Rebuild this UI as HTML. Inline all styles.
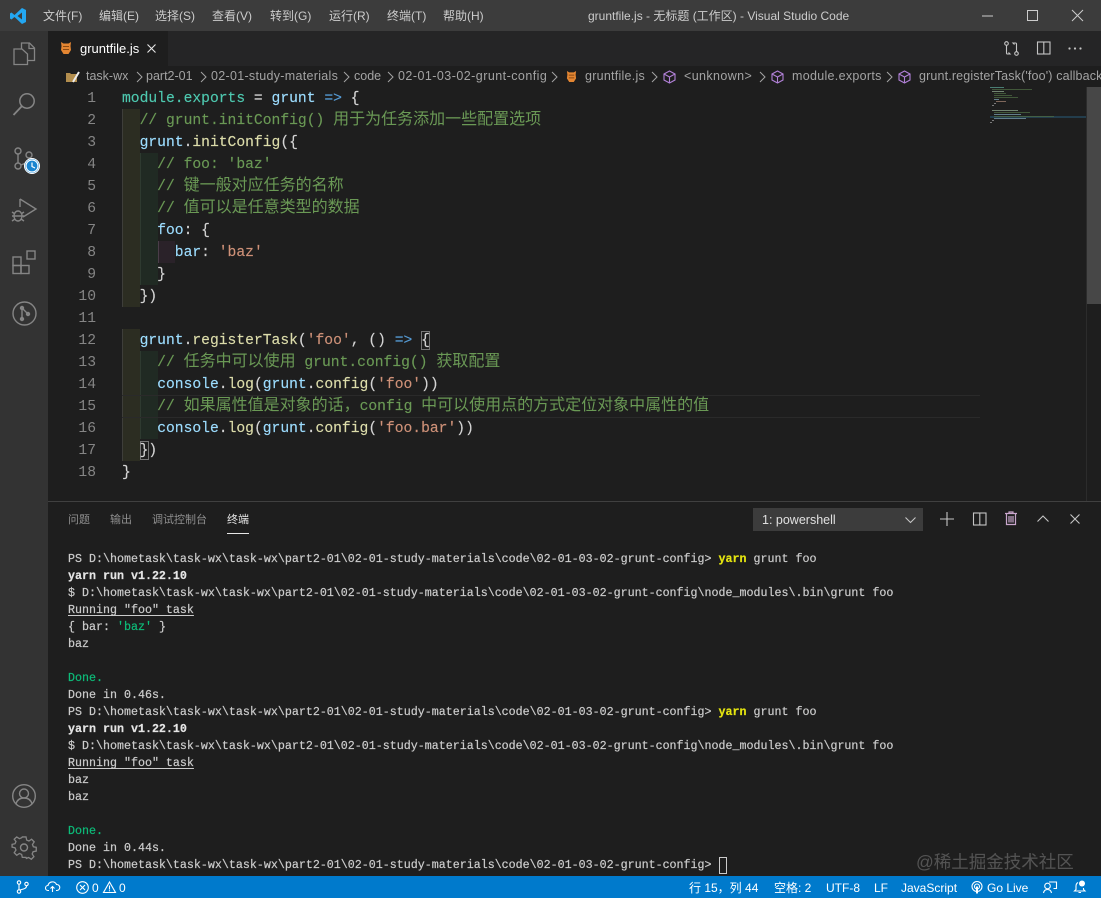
<!DOCTYPE html>
<html lang="zh"><head><meta charset="utf-8"><title>gruntfile.js - Visual Studio Code</title>
<style>
*{box-sizing:border-box}
html,body{margin:0;padding:0;background:#1e1e1e}
#app{position:relative;width:1101px;height:898px;overflow:hidden;background:#1e1e1e;font-family:"Liberation Sans","Noto Sans CJK SC",sans-serif;color:#ccc}
.a{position:absolute}
.t{position:absolute;white-space:pre;line-height:1}
svg{position:absolute;display:block;overflow:visible}
.m{font-size:12px;color:#ccc;top:9px;line-height:14px}
.bc{position:absolute;top:69px;font-size:12.5px;line-height:15px;color:#a3a3a3;white-space:pre}
.chev{position:absolute;top:70px;width:14px;height:14px}
.ln{position:absolute;left:48px;width:48px;text-align:right;height:22px;margin-top:1px;font:14.67px/22px "Liberation Mono",monospace;color:#858585}
.cl{position:absolute;left:122px;height:22px;margin-top:1px;white-space:pre;font:14.67px/22px "Liberation Mono","Noto Sans CJK SC",monospace;color:#d4d4d4;-webkit-text-stroke:.15px}
.cl i{font-style:normal;font-family:"Noto Sans CJK SC",sans-serif;font-size:16px;line-height:0;-webkit-text-stroke:0}
.w{color:#4ec9b0}.v{color:#9cdcfe}.k{color:#569cd6}.f{color:#dcdcaa}.s{color:#ce9178}.c{color:#6a9955}
.tm{position:absolute;left:68px;height:17px;margin-top:1px;white-space:pre;font:11.67px/17px "Liberation Mono",monospace;color:#ccc;-webkit-text-stroke:.2px}
.b{font-weight:bold;color:#e5e5e5}.y{color:#e5e510;font-weight:bold}.g{color:#23d18b}.gg{color:#0dbc79}
.u{text-decoration:underline;text-underline-offset:2px}
.pt{position:absolute;top:514px;font-size:11px;line-height:13px;color:#8f8f8f;white-space:pre}
.st{position:absolute;top:881px;font-size:12px;line-height:14px;color:#fff;white-space:pre}
.ind{position:absolute}
</style></head><body><div id="app">

<!-- title bar -->
<div class="a" style="left:0;top:0;width:1101px;height:31px;background:#3c3c3c"></div>
<svg style="left:9px;top:7px" width="18" height="18" viewBox="0 0 18 18"><path d="M13 1 L17 3 V15 L13 17 L5.500 10 L2.500 12.500 L1 11.500 V6.500 L2.500 5.500 L5.500 8 Z M13 5.500 L8.500 9 L13 12.500 Z" fill="#23a7f2" fill-rule="evenodd"/></svg>
<span class="t m" style="left:43px">文件(F)</span>
<span class="t m" style="left:99px">编辑(E)</span>
<span class="t m" style="left:155px">选择(S)</span>
<span class="t m" style="left:212px">查看(V)</span>
<span class="t m" style="left:270px">转到(G)</span>
<span class="t m" style="left:329px">运行(R)</span>
<span class="t m" style="left:387px">终端(T)</span>
<span class="t m" style="left:443px">帮助(H)</span>
<span class="t m" style="left:588px">gruntfile.js - 无标题 (工作区) - Visual Studio Code</span>
<svg style="left:982px;top:10px" width="11" height="11"><path d="M0 6h11" stroke="#ccc" fill="none"/></svg>
<svg style="left:1027px;top:10px" width="11" height="11"><rect x=".5" y=".5" width="10" height="10" stroke="#ccc" fill="none"/></svg>
<svg style="left:1072px;top:10px" width="11" height="11"><path d="M0 0L11 11M11 0L0 11" stroke="#ccc" fill="none"/></svg>

<!-- activity bar -->
<div class="a" style="left:0;top:31px;width:48px;height:845px;background:#333"></div>
<svg style="left:12px;top:42px" width="24" height="24" viewBox="0 0 24 24" fill="none" stroke="#858585" stroke-width="1.300"><path d="M9.500 7V1h8l5 5v12.500h-7"/><path d="M17 1v5.500h5.500"/><path d="M2 7h8l5.500 5v10.500H2z"/></svg>
<svg style="left:12px;top:92px" width="24" height="24" viewBox="0 0 24 24" fill="none" stroke="#858585" stroke-width="1.500"><circle cx="15" cy="9" r="7.200"/><path d="M9.800 14.200L1.500 23" stroke-width="1.800"/></svg>
<svg style="left:12px;top:146px" width="30" height="30" viewBox="0 0 30 30" fill="none" stroke="#858585" stroke-width="1.400"><circle cx="6" cy="5" r="3"/><circle cx="6" cy="20" r="3"/><circle cx="17" cy="9" r="3"/><path d="M6 8v9M17 12c0 4-5 6-8.300 7"/><circle cx="20" cy="20" r="7.500" fill="#1a85d0" stroke="#fff" stroke-width="1"/><circle cx="20" cy="20" r="6" fill="#1a85d0" stroke="#fff" stroke-width="1.200"/><path d="M20 16.500V20.500L23 22" stroke="#fff" stroke-width="1.200"/></svg>
<svg style="left:11px;top:197px" width="26" height="26" viewBox="0 0 26 26" fill="none" stroke="#858585" stroke-width="1.400"><path d="M9 2L25 12L12 20"/><path d="M9 2v8"/><ellipse cx="7" cy="19" rx="4" ry="5"/><path d="M1 15l3 2M13 15l-3 2M1 19h2M11 19h2M1 24l3-2M13 24l-3-2M3 19h8"/></svg>
<svg style="left:12px;top:250px" width="25" height="25" viewBox="0 0 25 25" fill="none" stroke="#858585" stroke-width="1.400"><rect x="1" y="7" width="8" height="8.500"/><rect x="1" y="15.500" width="8" height="8"/><rect x="9" y="15.500" width="8" height="8"/><rect x="15" y="1" width="8" height="8"/></svg>
<svg style="left:12px;top:301px" width="25" height="25" viewBox="0 0 25 25" fill="none" stroke="#858585" stroke-width="1.400"><circle cx="12.500" cy="12.500" r="11.500"/><circle cx="10" cy="7" r="1.500" fill="#858585"/><circle cx="10" cy="18" r="1.500" fill="#858585"/><circle cx="16" cy="13" r="1.500" fill="#858585"/><path d="M10 7v11M10 7l6 6"/></svg>
<svg style="left:12px;top:784px" width="24" height="24" viewBox="0 0 24 24" fill="none" stroke="#858585" stroke-width="1.400"><circle cx="12" cy="12" r="11.300"/><circle cx="12" cy="9.500" r="4.500"/><path d="M4 20c1-4 4-6 8-6s7 2 8 6"/></svg>
<svg style="left:12px;top:836px" width="24" height="24" viewBox="0 0 24 24" fill="none" stroke="#858585" stroke-width="1.400"><path d="M10 1h4l.7 3.400 2.400 1 2.900-1.900 2.800 2.800-1.900 2.900 1 2.400 3.100.6v4l-3.400.7-1 2.400 1.900 2.900-2.800 2.800-2.900-1.900-2.400 1L14 23h-4l-.7-3.200-2.400-1L4 20.700 1.300 18l1.900-2.900-1-2.400L-1 12V9l3.200-.7 1-2.400L1.300 3.500 4 1 6.900 2.900l2.400-1z" transform="translate(1 0) scale(.93)"/><circle cx="12" cy="11.500" r="3.500"/></svg>

<!-- tabs -->
<div class="a" style="left:48px;top:31px;width:1053px;height:35px;background:#252526"></div>
<div class="a" style="left:48px;top:31px;width:120px;height:35px;background:#1e1e1e"></div>
<svg style="left:60px;top:41px" width="12" height="14" viewBox="0 0 12 14"><path d="M1 1L3.500 2.500H8.500L11 1L10.500 5L11 9L8.500 13H3.500L1 9L1.500 5Z" fill="#e48632"/><path d="M3 5.500h6M3 8.500h6" stroke="#8a4a12" stroke-width="1"/></svg>
<span class="t" style="left:80px;top:41px;font-size:13px;line-height:16px;color:#fff">gruntfile.js</span>
<svg style="left:147px;top:44px" width="9" height="9"><path d="M.5.5L8.500 8.500M8.500.5L.5 8.500" stroke="#e8e8e8" stroke-width="1.100" fill="none"/></svg>
<svg style="left:1004px;top:41px" width="15" height="15" viewBox="0 0 15 15" fill="none" stroke="#c5c5c5" stroke-width="1.100"><circle cx="2.500" cy="2.500" r="1.800"/><circle cx="12.500" cy="12.500" r="1.800"/><path d="M2.500 4.500V12c0 .8.500 1 1 1H6L4.500 11.500M12.500 10.500V3c0-.8-.500-1-1-1H9l1.500 1.500"/></svg>
<svg style="left:1037px;top:41px" width="14" height="14" fill="none" stroke="#c5c5c5" stroke-width="1.100"><rect x=".5" y="1" width="12.500" height="12"/><path d="M6.800 1v12"/></svg>
<svg style="left:1068px;top:47px" width="14" height="3" fill="#c5c5c5"><circle cx="1.500" cy="1.500" r="1.100"/><circle cx="7" cy="1.500" r="1.100"/><circle cx="12.500" cy="1.500" r="1.100"/></svg>

<!-- breadcrumbs -->
<svg style="left:66px;top:71px" width="14" height="12" viewBox="0 0 14 12"><path d="M0 2h4l1 1h6v8H0z" fill="#b38e4e"/><path d="M7 11L13 1" stroke="#eee" stroke-width="2"/></svg>
<span class="bc" style="left:86px">task-wx</span>
<span class="bc" style="left:146px">part2-01</span>
<span class="bc" style="left:211px;letter-spacing:.3px">02-01-study-materials</span>
<span class="bc" style="left:354px">code</span>
<span class="bc" style="left:398px;letter-spacing:.46px">02-01-03-02-grunt-config</span>
<svg style="left:566px;top:70px" width="11" height="13" viewBox="0 0 12 14"><path d="M1 1L3.500 2.500H8.500L11 1L10.500 5L11 9L8.500 13H3.500L1 9L1.500 5Z" fill="#e48632"/><path d="M3 5.500h6M3 8.500h6" stroke="#8a4a12"/></svg>
<span class="bc" style="left:585px;letter-spacing:.25px">gruntfile.js</span>
<span class="bc" style="left:684px;letter-spacing:.4px">&lt;unknown&gt;</span>
<span class="bc" style="left:792px;letter-spacing:.3px">module.exports</span>
<span class="bc" style="width:182px;overflow:hidden;left:919px;letter-spacing:.15px">grunt.registerTask('foo') callback</span>
<svg class="chev" style="left:132px" viewBox="0 0 14 14"><path d="M5 2l5 5-5 5" fill="none" stroke="#a3a3a3"/></svg>
<svg class="chev" style="left:196px" viewBox="0 0 14 14"><path d="M5 2l5 5-5 5" fill="none" stroke="#a3a3a3"/></svg>
<svg class="chev" style="left:339px" viewBox="0 0 14 14"><path d="M5 2l5 5-5 5" fill="none" stroke="#a3a3a3"/></svg>
<svg class="chev" style="left:383px" viewBox="0 0 14 14"><path d="M5 2l5 5-5 5" fill="none" stroke="#a3a3a3"/></svg>
<svg class="chev" style="left:547px" viewBox="0 0 14 14"><path d="M5 2l5 5-5 5" fill="none" stroke="#a3a3a3"/></svg>
<svg class="chev" style="left:647px" viewBox="0 0 14 14"><path d="M5 2l5 5-5 5" fill="none" stroke="#a3a3a3"/></svg>
<svg class="chev" style="left:755px" viewBox="0 0 14 14"><path d="M5 2l5 5-5 5" fill="none" stroke="#a3a3a3"/></svg>
<svg class="chev" style="left:882px" viewBox="0 0 14 14"><path d="M5 2l5 5-5 5" fill="none" stroke="#a3a3a3"/></svg>
<svg style="left:663px;top:70px" width="13" height="14" viewBox="0 0 13 14" fill="none" stroke="#b180d7" stroke-width="1.100"><path d="M6.500 1L12 4v6l-5.500 3L1 10V4zM1 4l5.500 3L12 4M6.500 7v6"/></svg>
<svg style="left:771px;top:70px" width="13" height="14" viewBox="0 0 13 14" fill="none" stroke="#b180d7" stroke-width="1.100"><path d="M6.500 1L12 4v6l-5.500 3L1 10V4zM1 4l5.500 3L12 4M6.500 7v6"/></svg>
<svg style="left:898px;top:70px" width="13" height="14" viewBox="0 0 13 14" fill="none" stroke="#b180d7" stroke-width="1.100"><path d="M6.500 1L12 4v6l-5.500 3L1 10V4zM1 4l5.500 3L12 4M6.500 7v6"/></svg>

<!-- indent rainbow -->
<div class="ind" style="left:122px;top:109px;width:18px;height:198px;background:#2c2d22"></div>
<div class="ind" style="left:122px;top:329px;width:18px;height:132px;background:#2c2d22"></div>
<div class="ind" style="left:140px;top:153px;width:18px;height:132px;background:#202a23"></div>
<div class="ind" style="left:140px;top:351px;width:18px;height:88px;background:#202a23"></div>
<div class="ind" style="left:158px;top:241px;width:17px;height:22px;background:#2a2229"></div>
<div class="ind" style="left:122px;top:109px;width:1px;height:198px;background:#3e3e3a"></div>
<div class="ind" style="left:122px;top:329px;width:1px;height:132px;background:#3e3e3a"></div>
<div class="ind" style="left:140px;top:153px;width:1px;height:132px;background:#2e3a30"></div>
<div class="ind" style="left:140px;top:351px;width:1px;height:88px;background:#2e3a30"></div>
<div class="ind" style="left:158px;top:241px;width:1px;height:22px;background:#4a3d49"></div>
<!-- active line -->
<div class="ind" style="left:122px;top:395px;width:858px;height:23px;border-top:1px solid #2a2a2a;border-bottom:1px solid #2a2a2a"></div>
<!-- bracket match -->
<div class="ind" style="left:421px;top:331px;width:9px;height:19px;border:1px solid #777"></div>
<div class="ind" style="left:140px;top:441px;width:9px;height:19px;border:1px solid #777"></div>

<!-- line numbers -->
<div class="ln" style="top:87px">1</div><div class="ln" style="top:109px">2</div><div class="ln" style="top:131px">3</div><div class="ln" style="top:153px">4</div><div class="ln" style="top:175px">5</div><div class="ln" style="top:197px">6</div><div class="ln" style="top:219px">7</div><div class="ln" style="top:241px">8</div><div class="ln" style="top:263px">9</div><div class="ln" style="top:285px">10</div><div class="ln" style="top:307px">11</div><div class="ln" style="top:329px">12</div><div class="ln" style="top:351px">13</div><div class="ln" style="top:373px">14</div><div class="ln" style="top:395px">15</div><div class="ln" style="top:417px">16</div><div class="ln" style="top:439px">17</div><div class="ln" style="top:461px">18</div>

<!-- code -->
<div class="cl" style="top:87px"><span class="w">module.exports</span> = <span class="v">grunt</span> <span class="k">=&gt;</span> {</div>
<div class="cl c" style="top:109px;color:#6a9955">  // grunt.initConfig() <i>用于为任务添加一些配置选项</i></div>
<div class="cl" style="top:131px">  <span class="v">grunt</span>.<span class="f">initConfig</span>({</div>
<div class="cl" style="top:153px;color:#6a9955">    // foo: 'baz'</div>
<div class="cl" style="top:175px;color:#6a9955">    // <i>键一般对应任务的名称</i></div>
<div class="cl" style="top:197px;color:#6a9955">    // <i>值可以是任意类型的数据</i></div>
<div class="cl" style="top:219px">    <span class="v">foo</span>: {</div>
<div class="cl" style="top:241px">      <span class="v">bar</span>: <span class="s">'baz'</span></div>
<div class="cl" style="top:263px">    }</div>
<div class="cl" style="top:285px">  })</div>
<div class="cl" style="top:329px">  <span class="v">grunt</span>.<span class="f">registerTask</span>(<span class="s">'foo'</span>, () <span class="k">=&gt;</span> {</div>
<div class="cl" style="top:351px;color:#6a9955">    // <i>任务中可以使用</i> grunt.config() <i>获取配置</i></div>
<div class="cl" style="top:373px">    <span class="v">console</span>.<span class="f">log</span>(<span class="v">grunt</span>.<span class="f">config</span>(<span class="s">'foo'</span>))</div>
<div class="cl" style="top:395px;color:#6a9955">    // <i>如果属性值是对象的话，</i>config <i>中可以使用点的方式定位对象中属性的值</i></div>
<div class="cl" style="top:417px">    <span class="v">console</span>.<span class="f">log</span>(<span class="v">grunt</span>.<span class="f">config</span>(<span class="s">'foo.bar'</span>))</div>
<div class="cl" style="top:439px">  })</div>
<div class="cl" style="top:461px">}</div>

<!-- minimap -->
<svg style="left:990px;top:87px" width="97" height="40" shape-rendering="crispEdges">
<g fill-opacity=".75">
<rect x="0" y="0" width="14" height="1" fill="#5a9e90"/><rect x="2" y="2" width="40" height="1" fill="#4d6b43"/><rect x="2" y="4" width="12" height="1" fill="#8fa88f"/><rect x="4" y="6" width="12" height="1" fill="#4d6b43"/><rect x="4" y="8" width="18" height="1" fill="#4d6b43"/><rect x="4" y="10" width="24" height="1" fill="#4d6b43"/><rect x="4" y="12" width="5" height="1" fill="#7a9fb0"/><rect x="6" y="14" width="10" height="1" fill="#a08070"/><rect x="4" y="16" width="2" height="1" fill="#999"/><rect x="2" y="18" width="2" height="1" fill="#999"/>
<rect x="2" y="23" width="26" height="1" fill="#8fa88f"/><rect x="4" y="25" width="36" height="1" fill="#4d6b43"/><rect x="4" y="27" width="27" height="1" fill="#7a9fb0"/><rect x="0" y="29" width="97" height="2" fill="#25485c"/><rect x="4" y="29" width="60" height="1" fill="#4d6b43"/><rect x="4" y="31" width="32" height="1" fill="#7a9fb0"/><rect x="2" y="33" width="2" height="1" fill="#999"/><rect x="0" y="35" width="2" height="1" fill="#999"/>
</g></svg>
<!-- scrollbar -->
<div class="a" style="left:1087px;top:87px;width:14px;height:217px;background:#474747"></div>
<div class="a" style="left:1086px;top:87px;width:1px;height:414px;background:#2c2c2c"></div>

<!-- panel -->
<div class="a" style="left:48px;top:501px;width:1053px;height:1px;background:#404040"></div>
<span class="pt" style="left:68px">问题</span>
<span class="pt" style="left:110px">输出</span>
<span class="pt" style="left:152px">调试控制台</span>
<span class="pt" style="left:227px;color:#e7e7e7">终端</span>
<div class="a" style="left:227px;top:533px;width:22px;height:1px;background:#e7e7e7"></div>
<div class="a" style="left:753px;top:508px;width:170px;height:23px;background:#3c3c3c"></div>
<span class="t" style="left:762px;top:513px;font-size:12.500px;line-height:15px;color:#e0e0e0">1: powershell</span>
<svg style="left:905px;top:517px" width="11" height="7"><path d="M.5.5L5.500 5.500 10.500.5" fill="none" stroke="#c5c5c5" stroke-width="1.100"/></svg>
<svg style="left:940px;top:512px" width="14" height="14"><path d="M7 0v14M0 7h14" stroke="#c5c5c5" stroke-width="1.100" fill="none"/></svg>
<svg style="left:973px;top:512px" width="14" height="14" fill="none" stroke="#c5c5c5" stroke-width="1.100"><rect x=".5" y="1" width="12.500" height="12"/><path d="M6.800 1v12"/></svg>
<svg style="left:1005px;top:511px" width="12" height="14" viewBox="0 0 12 14" fill="none" stroke="#c9a6cc" stroke-width="1.200"><path d="M0 2.500h12M4 2.500V1h4v1.500M1.500 3v10.500h9V3M4 5v6.500M6 5v6.500M8 5v6.500"/></svg>
<svg style="left:1037px;top:515px" width="12" height="7"><path d="M.5 6.500L6 1l5.500 5.500" fill="none" stroke="#c5c5c5" stroke-width="1.100"/></svg>
<svg style="left:1070px;top:514px" width="10" height="10"><path d="M.5.5l9 9M9.500.5l-9 9" stroke="#c5c5c5" stroke-width="1.100" fill="none"/></svg>

<!-- terminal -->
<div class="tm" style="top:550px">PS D:\hometask\task-wx\task-wx\part2-01\02-01-study-materials\code\02-01-03-02-grunt-config&gt; <span class="y">yarn</span> grunt foo</div>
<div class="tm b" style="top:567px">yarn run v1.22.10</div>
<div class="tm" style="top:584px">$ D:\hometask\task-wx\task-wx\part2-01\02-01-study-materials\code\02-01-03-02-grunt-config\node_modules\.bin\grunt foo</div>
<div class="tm u" style="top:601px">Running "foo" task</div>
<div class="tm" style="top:618px">{ bar: <span class="gg">'baz'</span> }</div>
<div class="tm" style="top:635px">baz</div>
<div class="tm gg" style="top:669px;color:#0dbc79">Done.</div>
<div class="tm" style="top:686px">Done in 0.46s.</div>
<div class="tm" style="top:703px">PS D:\hometask\task-wx\task-wx\part2-01\02-01-study-materials\code\02-01-03-02-grunt-config&gt; <span class="y">yarn</span> grunt foo</div>
<div class="tm b" style="top:720px">yarn run v1.22.10</div>
<div class="tm" style="top:737px">$ D:\hometask\task-wx\task-wx\part2-01\02-01-study-materials\code\02-01-03-02-grunt-config\node_modules\.bin\grunt foo</div>
<div class="tm u" style="top:754px">Running "foo" task</div>
<div class="tm" style="top:771px">baz</div>
<div class="tm" style="top:788px">baz</div>
<div class="tm gg" style="top:822px;color:#0dbc79">Done.</div>
<div class="tm" style="top:839px">Done in 0.44s.</div>
<div class="tm" style="top:856px">PS D:\hometask\task-wx\task-wx\part2-01\02-01-study-materials\code\02-01-03-02-grunt-config&gt;</div>
<div class="a" style="left:719px;top:857px;width:8px;height:17px;border:1px solid #ccc"></div>

<span class="t" style="left:916px;top:852px;font-size:17.500px;line-height:20px;color:rgba(255,255,255,.24)">@稀土掘金技术社区</span>

<!-- status bar -->
<div class="a" style="left:0;top:876px;width:1101px;height:22px;background:#007acc"></div>
<svg style="left:16px;top:880px" width="13" height="14" fill="none" stroke="#fff" stroke-width="1.100"><circle cx="3" cy="2.500" r="1.700"/><circle cx="3" cy="11.500" r="1.700"/><circle cx="10.500" cy="4" r="1.700"/><path d="M3 4.500v5M10.500 6c0 3-4 3-6.500 4"/></svg>
<svg style="left:45px;top:881px" width="15" height="12" fill="none" stroke="#fff" stroke-width="1.100"><path d="M4 9.500H3a2.500 2.500 0 0 1 0-5 4.500 4.500 0 0 1 8.500-1 3 3 0 0 1 .5 6h-1"/><path d="M7.500 11V5.500M5.500 7.500l2-2 2 2"/></svg>
<svg style="left:76px;top:881px" width="13" height="13" fill="none" stroke="#fff" stroke-width="1.100"><circle cx="6.500" cy="6.500" r="5.800"/><path d="M4 4l5 5M9 4l-5 5"/></svg>
<span class="st" style="left:92px">0</span>
<svg style="left:103px;top:881px" width="13" height="12" fill="none" stroke="#fff" stroke-width="1.100"><path d="M6.500 1L12.500 11.500H.5zM6.500 4.500v4M6.500 9.300v1"/></svg>
<span class="st" style="left:119px">0</span>
<span class="st" style="left:689px">行 15，列 44</span>
<span class="st" style="left:774px">空格: 2</span>
<span class="st" style="left:826px">UTF-8</span>
<span class="st" style="left:874px">LF</span>
<span class="st" style="left:901px">JavaScript</span>
<svg style="left:971px;top:881px" width="12" height="13" fill="none" stroke="#fff" stroke-width="1.100"><circle cx="6" cy="5.500" r="5"/><circle cx="6" cy="5.500" r="2.500"/><path d="M6 5.500v7" stroke-width="2"/></svg>
<span class="st" style="left:987px">Go Live</span>
<svg style="left:1043px;top:881px" width="14" height="13" fill="none" stroke="#fff" stroke-width="1.100"><circle cx="4.500" cy="5" r="2.800"/><path d="M.5 12c.5-2.500 2-3.500 4-3.500s3.500 1 4 3.500M6 1h7.500v6.500h-3"/></svg>
<svg style="left:1074px;top:880px" width="12" height="14"><path d="M4 2.500A4 4 0 0 0 2 6v3.500L.5 11h10.500L9.500 9.500V8" fill="none" stroke="#fff" stroke-width="1.100"/><circle cx="8" cy="3.500" r="3" fill="#fff"/><path d="M4.500 12.500h2.500" stroke="#fff"/></svg>
</div></body></html>
